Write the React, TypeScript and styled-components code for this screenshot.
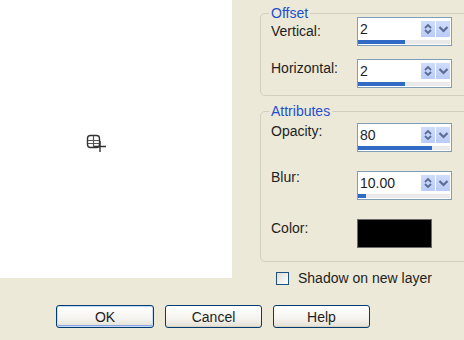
import React from "react";
import styled, { createGlobalStyle } from "styled-components";

const GlobalStyle = createGlobalStyle`
  html, body {
    margin: 0;
    padding: 0;
    background: #ece9d8;
    overflow: hidden;
  }
  body {
    font-family: "Liberation Sans", Arial, sans-serif;
    font-size: 14px;
    line-height: 16px;
    color: #1e1e1e;
  }
`;

const Dialog = styled.div`
  width: 464px;
  height: 340px;
  display: flex;
  flex-direction: column;
  overflow: hidden;
`;

const Top = styled.div`
  display: flex;
  align-items: flex-start;
  gap: 28px;
`;

const Preview = styled.div`
  width: 232px;
  height: 278px;
  flex-shrink: 0;
  background: #fff;
  display: flex;
  align-items: center;
  justify-content: center;
`;

const PreviewMark = styled.svg`
  width: 22px;
  height: 20px;
  margin: 8px 40px 0 0;
`;

const Side = styled.div`
  width: 215px;
  flex-shrink: 0;
  display: flex;
  flex-direction: column;
`;

const Group = styled.div<{ $top: number; $bottom: number }>`
  margin-top: ${(p) => p.$top}px;
  border: 1px solid #d0d0bf;
  border-radius: 5px;
  padding: 0 0 ${(p) => p.$bottom}px 10px;
`;

const Caption = styled.div`
  margin: -9px 0 -4px -2px;
  padding: 0 2px;
  width: fit-content;
  background: #ece9d8;
  color: #1f50cf;
`;

const Rows = styled.div<{ $gap: number; $pad: number }>`
  display: grid;
  grid-template-columns: 86px auto;
  row-gap: ${(p) => p.$gap}px;
  padding-top: ${(p) => p.$pad}px;
  justify-content: start;
`;

const Label = styled.div<{ $drop: number }>`
  margin-top: ${(p) => p.$drop}px;
`;

const SpinBox = styled.div`
  width: 93px;
  height: 27px;
  border: 1px solid #7f9db9;
  background: #fff;
  display: flex;
  flex-direction: column;
`;

const SpinTop = styled.div`
  height: 22px;
  display: flex;
  align-items: center;
`;

const Value = styled.div`
  flex: 1;
  padding-left: 2px;
`;

const SpinButton = styled.div`
  width: 14px;
  height: 16px;
  margin-right: 1px;
  background: linear-gradient(#d0dcfc, #b9cbf7);
  display: flex;
  align-items: center;
  justify-content: center;
`;

const Track = styled.div`
  height: 4px;
  margin: 0 1px 0 0;
  background: #e9e9e9;
`;

const Bar = styled.div`
  height: 100%;
  background: #316ac5;
`;

const Swatch = styled.div`
  width: 73px;
  height: 27px;
  border: 1px solid #6b6b6b;
  background: #000;
`;

const CheckRow = styled.label`
  margin: 8px 0 0 16px;
  display: flex;
  align-items: center;
  gap: 9px;
`;

const Box = styled.span`
  width: 11px;
  height: 11px;
  border: 1px solid #1c5180;
  background: linear-gradient(135deg, #dcdcd4, #f6f6f2 70%, #fff);
`;

const Buttons = styled.div`
  margin: 19px 0 0 56px;
  display: flex;
  gap: 11px;
`;

const Button = styled.button<{ $default?: boolean; $w: number }>`
  width: ${(p) => p.$w}px;
  height: 23px;
  padding: 0;
  font: inherit;
  color: #1e1e1e;
  border: 1px solid #003c74;
  border-radius: 3px;
  background: linear-gradient(#ffffff, #f4f3ee 60%, #e3e0d4);
  box-shadow: ${(p) =>
    p.$default
      ? "inset 0 0 0 1px #c5d8f7, inset 0 -1px 0 1px #88a6e6"
      : "inset 0 -1px 0 #d8d2c2"};
`;

const UpDown = () => (
  <svg width="10" height="12" viewBox="0 0 10 12">
    <path d="M2 5 L5 2 L8 5" fill="none" stroke="#5a6d94" strokeWidth="1.8" />
    <path d="M2 7 L5 10 L8 7" fill="none" stroke="#5a6d94" strokeWidth="1.8" />
  </svg>
);

const Chevron = () => (
  <svg width="11" height="10" viewBox="0 0 11 10">
    <path d="M1.5 3 L5.5 7 L9.5 3" fill="none" stroke="#5a6d94" strokeWidth="2.2" />
  </svg>
);

const Spin = ({ value, pct }: { value: string; pct: number }) => (
  <SpinBox>
    <SpinTop>
      <Value>{value}</Value>
      <SpinButton>
        <UpDown />
      </SpinButton>
      <SpinButton>
        <Chevron />
      </SpinButton>
    </SpinTop>
    <Track>
      <Bar style={{ width: `${pct}%` }} />
    </Track>
  </SpinBox>
);

const App = () => {
  return (
    <Dialog>
      <GlobalStyle />
      <Top>
        <Preview>
          <PreviewMark viewBox="0 0 22 20">
            <rect x="2.5" y="2.5" width="12" height="12" rx="3" fill="none" stroke="#333" strokeWidth="1.4" />
            <path d="M3 7.5 H14 M3 10.5 H14 M8.5 3 V14" stroke="#555" strokeWidth="1.2" />
            <path d="M15 8 V19 M9 13.5 H21" stroke="#333" strokeWidth="1.4" />
          </PreviewMark>
        </Preview>
        <Side>
          <Group $top={13} $bottom={7}>
            <Caption>Offset</Caption>
            <Rows $gap={13} $pad={0}>
              <Label $drop={6}>Vertical:</Label>
              <Spin value="2" pct={51} />
              <Label $drop={1}>Horizontal:</Label>
              <Spin value="2" pct={51} />
            </Rows>
          </Group>
          <Group $top={15} $bottom={13}>
            <Caption>Attributes</Caption>
            <Rows $gap={19} $pad={8}>
              <Label $drop={0}>Opacity:</Label>
              <Spin value="80" pct={80} />
              <Label $drop={-2}>Blur:</Label>
              <Spin value="10.00" pct={9} />
              <Label $drop={1}>Color:</Label>
              <Swatch />
            </Rows>
          </Group>
          <CheckRow>
            <Box />
            Shadow on new layer
          </CheckRow>
        </Side>
      </Top>
      <Buttons>
        <Button $default $w={98}>OK</Button>
        <Button $w={97}>Cancel</Button>
        <Button $w={97}>Help</Button>
      </Buttons>
    </Dialog>
  );
};

export default App;
